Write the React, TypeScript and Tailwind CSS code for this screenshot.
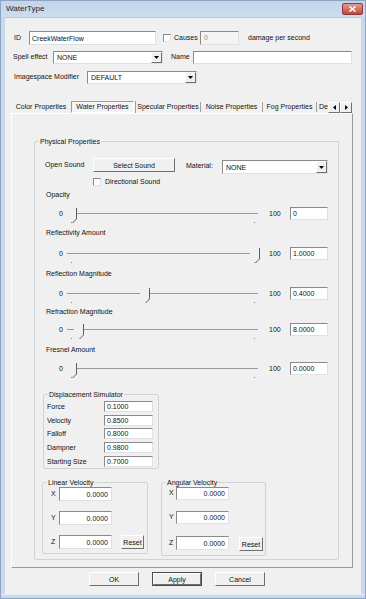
import React from "react";

const sunken = "border border-t-[#8a8a8a] border-l-[#8a8a8a] border-r-[#e0e0e0] border-b-[#e0e0e0]";
const raised = "border border-t-white border-l-white border-r-[#6f6f6f] border-b-[#6f6f6f] bg-[#f0f0f0]";

function Edit({ className = "", value = "", right = false }: { className?: string; value?: string; right?: boolean }) {
  return (
    <div className={`${sunken} bg-white ${className} flex items-center px-[2px] ${right ? "justify-end pr-[3px]" : ""}`}>
      <span className="leading-none whitespace-nowrap">{value}</span>
    </div>
  );
}

function Arrow() {
  return (
    <svg width="5" height="3" viewBox="0 0 5 3">
      <polygon points="0,0 5,0 2.5,3" fill="#000" />
    </svg>
  );
}

function Combo({ className = "", value }: { className?: string; value: string }) {
  return (
    <div className={`${sunken} bg-white ${className} flex items-stretch`}>
      <span className="flex-1 flex items-center pl-[3px] leading-none">{value}</span>
      <span className={`${raised} w-[11px] flex items-center justify-center`}>
        <Arrow />
      </span>
    </div>
  );
}

function Check({ className = "" }: { className?: string }) {
  return <span className={`${sunken} bg-white block w-[8px] h-[8px] shrink-0 ${className}`} />;
}

function Btn({ className = "", label }: { className?: string; label: string }) {
  return <div className={`${raised} ${className} flex items-center justify-center leading-none`}>{label}</div>;
}

function SliderBlock({ label, thumb, value, mt1, mt2 }: { label: string; thumb: number; value: string; mt1: string; mt2: string }) {
  return (
    <>
      <div className={`h-[10px] leading-[10px] pl-[11px] ${mt1}`}>{label}</div>
      <div className={`h-[16px] flex items-center ${mt2}`}>
        <span className="w-[24px] shrink-0" />
        <span className="w-[5px] shrink-0 leading-none">0</span>
        <svg width="205" height="16" className="overflow-visible shrink-0">
          <line x1="3" y1="8.5" x2="194" y2="8.5" stroke="#9a9a9a" />
          <rect x={thumb - 9} y="1" width="9" height="14" fill="#f0f0f0" />
          <line x1={thumb + 0.5} y1="3" x2={thumb + 0.5} y2="14" stroke="#5e5e5e" />
          <line x1={thumb + 0.5} y1="14" x2={thumb - 3.5} y2="18" stroke="#5e5e5e" />
          <rect x="7" y="17" width="1" height="1" fill="#8a8a8a" />
          <rect x="190" y="17" width="1" height="1" fill="#8a8a8a" />
        </svg>
        <span className="w-[21px] shrink-0 leading-none">100</span>
        <Edit className="w-[38px] h-[13px]" value={value} />
      </div>
    </>
  );
}

function Legend({ text }: { text: string }) {
  return <legend className="ml-[4px] px-[1px] leading-[9px]">{text}</legend>;
}

export default function App() {
  return (
    <div className="w-[366px] h-[599px] flex flex-col bg-[#c9d9ec] border border-[#8da5c2] font-['Liberation_Sans',Arial,sans-serif] text-[7px] text-[#111] overflow-hidden">
      {/* title bar */}
      <div className="h-[16px] shrink-0 flex items-start justify-between bg-gradient-to-b from-[#c3d5ea] to-[#cddcee]">
        <span className="pl-[5px] pt-[4px] text-[8px] leading-none text-[#1c1c1c]">WaterType</span>
        <div className="mt-[2px] mr-[2px] w-[21px] h-[12px] rounded-[2px] border border-[#8a3a3a] bg-gradient-to-b from-[#e39a8f] to-[#c4443a] flex items-center justify-center">
          <svg width="7" height="6" viewBox="0 0 7 6">
            <path d="M0.5 0.5 L6.5 5.5 M6.5 0.5 L0.5 5.5" stroke="#fff" strokeWidth="1.6" />
          </svg>
        </div>
      </div>

      <div className="flex-1 flex min-h-0">
        <div className="w-[4px] shrink-0" />
        {/* client area */}
        <div className="flex-1 bg-[#f0f0f0] flex flex-col border-t border-[#b9c9db]">
          {/* row 1 */}
          <div className="mt-[13px] h-[14px] flex items-center pl-[9px]">
            <span className="w-[15px] shrink-0">ID</span>
            <Edit className="w-[127px] h-[14px]" value="CreekWaterFlow" />
            <Check className="ml-[7px]" />
            <span className="ml-[3px] w-[26px] shrink-0">Causes</span>
            <div className={`${sunken} bg-[#f4f4f4] w-[39px] h-[14px] flex items-center pl-[3px] text-[#909090]`}>0</div>
            <span className="ml-[9px] whitespace-nowrap">damage per second</span>
          </div>
          {/* row 2 */}
          <div className="mt-[6px] h-[13px] flex items-center pl-[8px]">
            <span className="w-[40px] shrink-0 whitespace-nowrap">Spell effect</span>
            <Combo className="w-[110px] h-[13px]" value="NONE" />
            <span className="ml-[8px] w-[22px] shrink-0">Name</span>
            <Edit className="w-[159px] h-[13px]" />
          </div>
          {/* row 3 */}
          <div className="mt-[7px] h-[13px] flex items-center pl-[9px]">
            <span className="w-[73px] shrink-0 whitespace-nowrap">Imagespace Modifier</span>
            <Combo className="w-[110px] h-[13px]" value="DEFAULT" />
          </div>

          {/* tabs */}
          <div className="mt-[17px] ml-[6px] h-[12px] flex items-stretch whitespace-nowrap">
            <div className="w-[60px] flex items-center justify-center">Color Properties</div>
            <div className="w-[63px] flex items-center justify-center border border-t-[#9a9a9a] border-l-[#9a9a9a] border-r-white border-b-white bg-[#f4f4f4]">Water Properties</div>
            <div className="w-[2px] border-r border-[#a0a0a0]" />
            <div className="w-[64px] flex items-center justify-center">Specular Properties</div>
            <div className="w-[1px] my-[1px] bg-[#a0a0a0]" />
            <div className="w-[61px] flex items-center justify-center">Noise Properties</div>
            <div className="w-[1px] my-[1px] bg-[#a0a0a0]" />
            <div className="w-[53px] flex items-center justify-center">Fog Properties</div>
            <div className="w-[1px] my-[1px] bg-[#a0a0a0]" />
            <div className="w-[11px] flex items-center pl-[2px]">De</div>
            <div className="w-[24px] flex mt-[1px]">
              <div className={`${raised} w-[12px] flex items-center justify-center`}>
                <svg width="3" height="5" viewBox="0 0 3 5"><polygon points="3,0 3,5 0,2.5" fill="#000" /></svg>
              </div>
              <div className={`${raised} w-[12px] flex items-center justify-center`}>
                <svg width="3" height="5" viewBox="0 0 3 5"><polygon points="0,0 0,5 3,2.5" fill="#000" /></svg>
              </div>
            </div>
          </div>

          {/* tab page */}
          <div className="ml-[6px] w-[342px] h-[455px] border border-t-white border-l-white border-r-[#9a9a9a] border-b-[#9a9a9a] flex flex-col">
            <fieldset className="ml-[22px] mt-[23px] w-[305px] h-[423px] border border-[#cfd3d6] rounded-[2px] flex flex-col">
              <Legend text="Physical Properties" />
              {/* open sound */}
              <div className="mt-[12px] h-[14px] flex items-start pl-[10px]">
                <span className="w-[48px] shrink-0 h-[14px] leading-[14px] whitespace-nowrap">Open Sound</span>
                <Btn className="w-[82px] h-[14px]" label="Select Sound" />
                <span className="ml-[11px] w-[36px] shrink-0 h-[14px] leading-[16px]">Material:</span>
                <Combo className="w-[106px] h-[14px] mt-[2px]" value="NONE" />
              </div>
              <div className="mt-[5px] h-[9px] flex items-center pl-[58px]">
                <Check />
                <span className="ml-[4px] leading-none">Directional Sound</span>
              </div>

              <SliderBlock label="Opacity" thumb={12} value="0" mt1="mt-[4px]" mt2="mt-[5px]" />
              <SliderBlock label="Reflectivity Amount" thumb={195} value="1.0000" mt1="mt-[7px]" mt2="mt-[7px]" />
              <SliderBlock label="Reflection Magnitude" thumb={85} value="0.4000" mt1="mt-[8px]" mt2="mt-[6px]" />
              <SliderBlock label="Refraction Magnitude" thumb={19} value="8.0000" mt1="mt-[6px]" mt2="mt-[4px]" />
              <SliderBlock label="Fresnel Amount" thumb={12} value="0.0000" mt1="mt-[8px]" mt2="mt-[5px]" />

              {/* displacement */}
              <fieldset className="ml-[8px] mt-[14px] w-[116px] border border-[#cfd3d6] rounded-[2px] pb-[1px]">
                <Legend text="Displacement Simulator" />
                {[
                  ["Force", "0.1000", "mt-[2px]"],
                  ["Velocity", "0.8500", "mt-[3px]"],
                  ["Falloff", "0.8000", "mt-[2px]"],
                  ["Dampner", "0.9800", "mt-[3px]"],
                  ["Starting Size", "0.7000", "mt-[3px]"],
                ].map(([l, v, m]) => (
                  <div key={l} className={`${m} h-[11px] flex items-center pl-[3px]`}>
                    <span className="w-[57px] shrink-0 whitespace-nowrap leading-none">{l}</span>
                    <Edit className="w-[49px] h-[11px]" value={v} />
                  </div>
                ))}
              </fieldset>

              {/* velocities */}
              <div className="mt-[9px] flex items-start">
                <fieldset className="ml-[7px] w-[106px] border border-[#cfd3d6] rounded-[2px] pb-[4px]">
                  <Legend text="Linear Velocity" />
                  <div className="h-[14px] flex items-center pl-[8px]">
                    <span className="w-[8px] shrink-0">X</span>
                    <Edit className="w-[53px] h-[14px]" value="0.0000" right />
                  </div>
                  <div className="mt-[10px] h-[14px] flex items-center pl-[8px]">
                    <span className="w-[8px] shrink-0">Y</span>
                    <Edit className="w-[53px] h-[14px]" value="0.0000" right />
                  </div>
                  <div className="mt-[10px] h-[14px] flex items-center pl-[8px]">
                    <span className="w-[8px] shrink-0">Z</span>
                    <Edit className="w-[53px] h-[14px]" value="0.0000" right />
                    <Btn className="ml-[9px] w-[23px] h-[14px]" label="Reset" />
                  </div>
                </fieldset>
                <fieldset className="ml-[13px] w-[105px] border border-[#cfd3d6] rounded-[2px] pb-[4px]">
                  <Legend text="Angular Velocity" />
                  <div className="h-[13px] flex items-center pl-[7px]">
                    <span className="w-[7px] shrink-0">X</span>
                    <Edit className="w-[53px] h-[13px]" value="0.0000" right />
                  </div>
                  <div className="mt-[11px] h-[13px] flex items-center pl-[7px]">
                    <span className="w-[7px] shrink-0">Y</span>
                    <Edit className="w-[53px] h-[13px]" value="0.0000" right />
                  </div>
                  <div className="mt-[12px] h-[15px] flex items-start pl-[7px]">
                    <span className="w-[7px] shrink-0 h-[14px] leading-[14px]">Z</span>
                    <Edit className="w-[53px] h-[14px]" value="0.0000" right />
                    <Btn className="ml-[10px] mt-[1px] w-[24px] h-[14px]" label="Reset" />
                  </div>
                </fieldset>
              </div>
            </fieldset>
          </div>

          {/* dialog buttons */}
          <div className="mt-[4px] ml-[84px] flex gap-[13px]">
            <Btn className="w-[50px] h-[14px]" label="OK" />
            <div className="w-[50px] h-[14px] border border-[#4a4a4a] flex">
              <Btn className="flex-1" label="Apply" />
            </div>
            <Btn className="w-[50px] h-[14px]" label="Cancel" />
          </div>
        </div>
        <div className="w-[4px] shrink-0" />
      </div>
      <div className="h-[4px] shrink-0 border-t border-[#e8eef6]" />
    </div>
  );
}
